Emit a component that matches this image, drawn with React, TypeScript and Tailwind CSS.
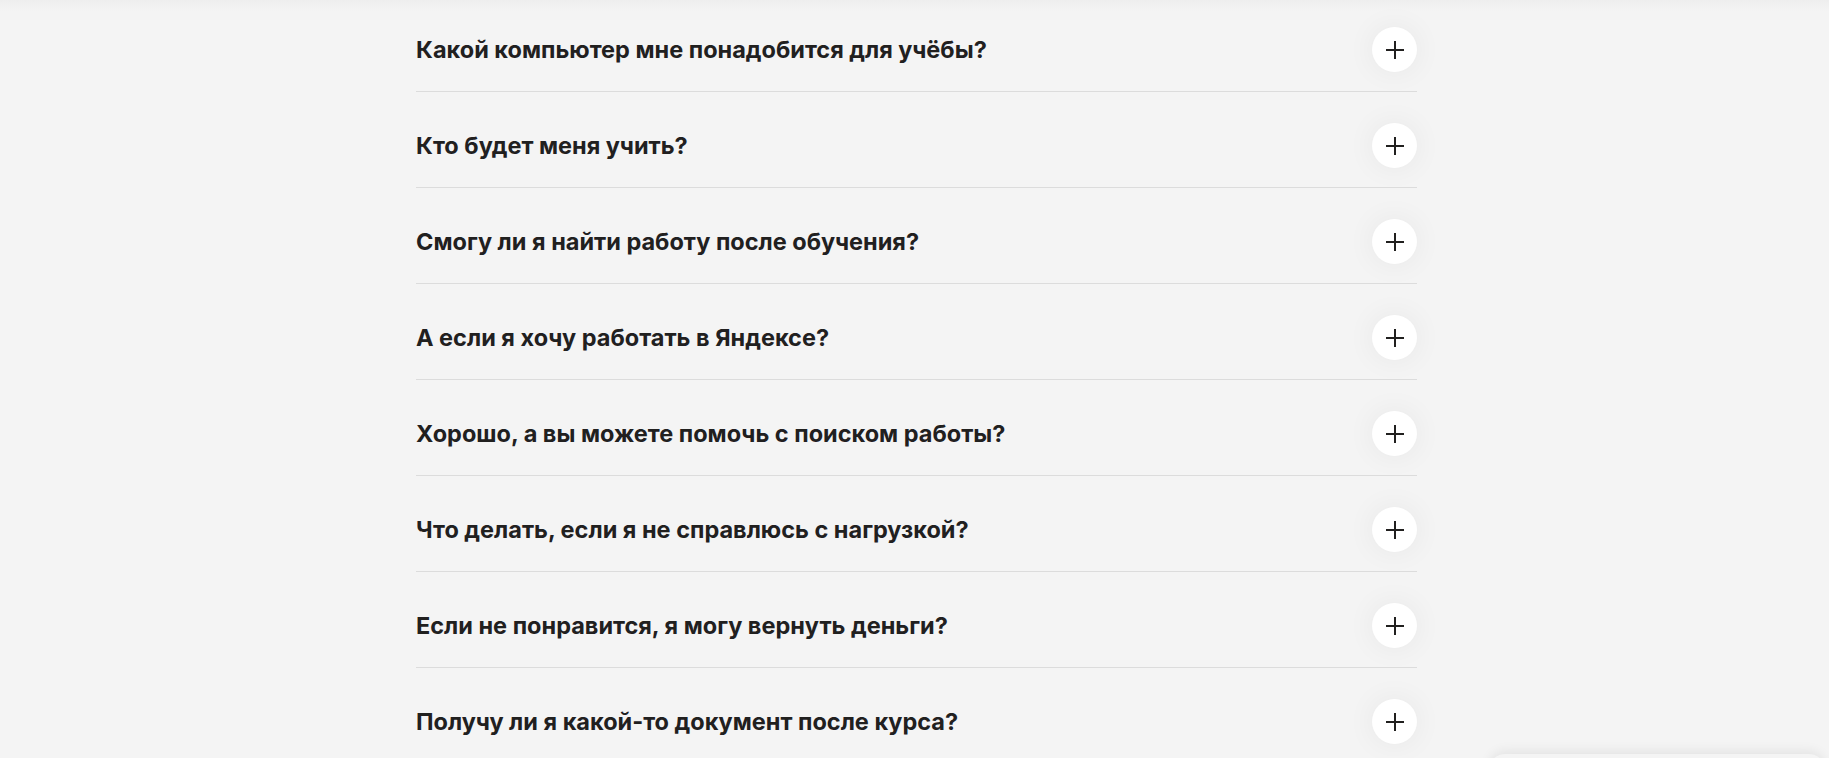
import React, { useState } from 'react';

const questions = [
  'Какой компьютер мне понадобится для учёбы?',
  'Кто будет меня учить?',
  'Смогу ли я найти работу после обучения?',
  'А если я хочу работать в Яндексе?',
  'Хорошо, а вы можете помочь с поиском работы?',
  'Что делать, если я не справлюсь с нагрузкой?',
  'Если не понравится, я могу вернуть деньги?',
  'Получу ли я какой-то документ после курса?',
];

function PlusIcon() {
  return (
    <svg width="20" height="20" viewBox="0 0 20 20" fill="none">
      <path d="M10 1v18M1 10h18" stroke="#21201f" strokeWidth="2" />
    </svg>
  );
}

export default function App() {
  const [open, setOpen] = useState<number | null>(null);

  return (
    <div className="relative h-[758px] overflow-hidden bg-[#f4f4f4] font-['Inter','Noto_Sans',sans-serif]">
      {/* top fade from the section above */}
      <div className="pointer-events-none absolute inset-x-0 top-0 h-3 bg-gradient-to-b from-[#eeeeee] to-transparent" />

      <div className="mx-auto -mt-[4px] w-[1005px] pl-[4px]">
        {questions.map((q, i) => (
          <div key={q} className="border-b border-[#dcdcdc]">
            <button
              onClick={() => setOpen(open === i ? null : i)}
              className="flex w-full items-center justify-between pt-[31px] pb-[19px] text-left"
            >
              <span className="text-[23.5px] font-bold leading-[28px] text-[#21201f]">{q}</span>
              <span className="flex h-[45px] w-[45px] shrink-0 items-center justify-center rounded-full bg-white shadow-[0_0_30px_rgba(0,0,0,0.06)]">
                <PlusIcon />
              </span>
            </button>
            {open === i && (
              <p className="pb-6 text-[17px] text-[#4d4d4d]">Ответ появится здесь.</p>
            )}
          </div>
        ))}
      </div>

      {/* widget peeking from below */}
      <div className="absolute right-[4px] top-[754px] h-20 w-[336px] rounded-2xl bg-[#f4f4f4] shadow-[0_-3px_12px_rgba(0,0,0,0.07)]" />
    </div>
  );
}
